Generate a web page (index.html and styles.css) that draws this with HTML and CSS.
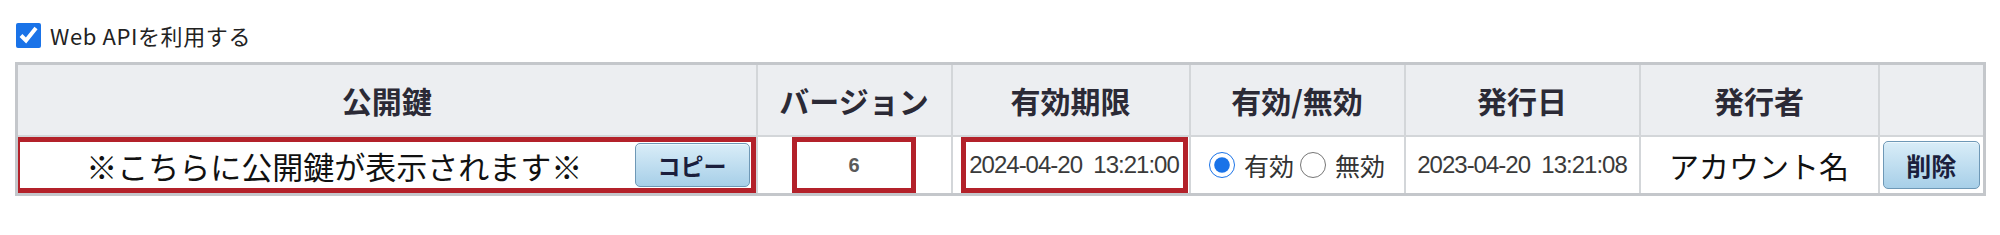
FILE: index.html
```html
<!DOCTYPE html>
<html lang="ja">
<head>
    <meta charset="UTF-8">
    <title>Web API 公開鍵</title>
    <link rel="stylesheet" href="styles.css">
</head>
<body>
    <label class="api-toggle">
        <input type="checkbox" checked>
        <span>Web APIを利用する</span>
    </label>

    <table class="key-table">
        <colgroup>
            <col class="col-key">
            <col class="col-version">
            <col class="col-expiry">
            <col class="col-status">
            <col class="col-issued">
            <col class="col-issuer">
            <col class="col-action">
        </colgroup>
        <thead>
            <tr>
                <th>公開鍵</th>
                <th>バージョン</th>
                <th>有効期限</th>
                <th>有効/無効</th>
                <th>発行日</th>
                <th>発行者</th>
                <th></th>
            </tr>
        </thead>
        <tbody>
            <tr>
                <td>
                    <div class="highlight key-box">
                        <span class="key-text">※こちらに公開鍵が表示されます※</span>
                        <button class="btn btn-copy">コピー</button>
                    </div>
                </td>
                <td>
                    <div class="highlight version-box">6</div>
                </td>
                <td>
                    <div class="highlight expiry-box">2024-04-20&nbsp; 13:21:00</div>
                </td>
                <td>
                    <div class="status">
                        <label class="radio"><input type="radio" name="status" checked>有効</label>
                        <label class="radio"><input type="radio" name="status">無効</label>
                    </div>
                </td>
                <td class="date">2023-04-20&nbsp; 13:21:08</td>
                <td class="account">アカウント名</td>
                <td><button class="btn btn-delete">削除</button></td>
            </tr>
        </tbody>
    </table>
</body>
</html>
```

FILE: styles.css
```css
body {
    margin: 0;
    padding: 21px 0 0 15px;
    font-family: "Noto Sans CJK JP", "Noto Sans", sans-serif;
    background: #fff;
    color: #111;
}
.api-toggle {
    display: flex;
    align-items: center;
    gap: 9px;
    height: 28px;
    font-size: 22px;
    letter-spacing: 0.6px;
    color: #222;
    margin-bottom: 13px;
}
.api-toggle input {
    width: 25px;
    height: 25px;
    margin: 0 0 0 1px;
    accent-color: #1a73e8;
}
.key-table {
    border-collapse: collapse;
    table-layout: fixed;
    width: 1968px;
    border: 3px solid #c4c7cb;
}
.col-key { width: 740px; }
.col-version { width: 195px; }
.col-expiry { width: 238px; }
.col-status { width: 215px; }
.col-issued { width: 235px; }
.col-issuer { width: 239px; }
.col-action { width: 106px; }
th {
    height: 70px;
    padding: 0;
    background: #eceef1;
    border: 2px solid #d3d6d9;
    font-size: 30px;
    font-weight: 700;
    color: #2b2a36;
}
td {
    height: 56px;
    padding: 0;
    border: 2px solid #d3d6d9;
    text-align: center;
    vertical-align: middle;
}
.highlight {
    box-sizing: border-box;
    height: 56px;
    border: 5px solid #b3212a;
    display: flex;
    align-items: center;
}
.key-box {
    margin-left: -3px;
    padding-right: 1px;
}
.key-text {
    flex: 1;
    font-size: 31px;
    padding-left: 14px;
    color: #111;
}
.version-box {
    width: 124px;
    margin: 0 auto;
    justify-content: center;
    font-family: "Liberation Sans", sans-serif;
    font-size: 20px;
    font-weight: 700;
    color: #5a5a5a;
}
.expiry-box,
.date {
    font-family: "Liberation Sans", sans-serif;
    font-size: 24px;
    letter-spacing: -1px;
    color: #3a3a3a;
}
.expiry-box {
    width: 227px;
    margin-left: 8px;
    justify-content: center;
    white-space: nowrap;
}
.status {
    display: flex;
    align-items: center;
    justify-content: center;
    gap: 6px;
}
.radio {
    display: flex;
    align-items: center;
    gap: 9px;
    font-size: 25px;
    color: #333;
}
.radio input {
    width: 26px;
    height: 26px;
    margin: 0;
    accent-color: #1a73e8;
}
.account {
    font-size: 30px;
    color: #111;
}
.btn {
    font-family: "Noto Sans CJK JP", sans-serif;
    font-weight: 700;
    color: #1b1f3d;
    background: linear-gradient(#d9edf8, #a7cfe8);
    border: 1px solid #6e98b6;
    border-radius: 5px;
    box-shadow: inset 0 1px 0 #eef8fd;
    padding: 0;
    cursor: pointer;
}
.btn-copy {
    width: 115px;
    height: 44px;
    font-size: 23px;
}
.btn-delete {
    width: 97px;
    height: 48px;
    font-size: 25px;
}
```
